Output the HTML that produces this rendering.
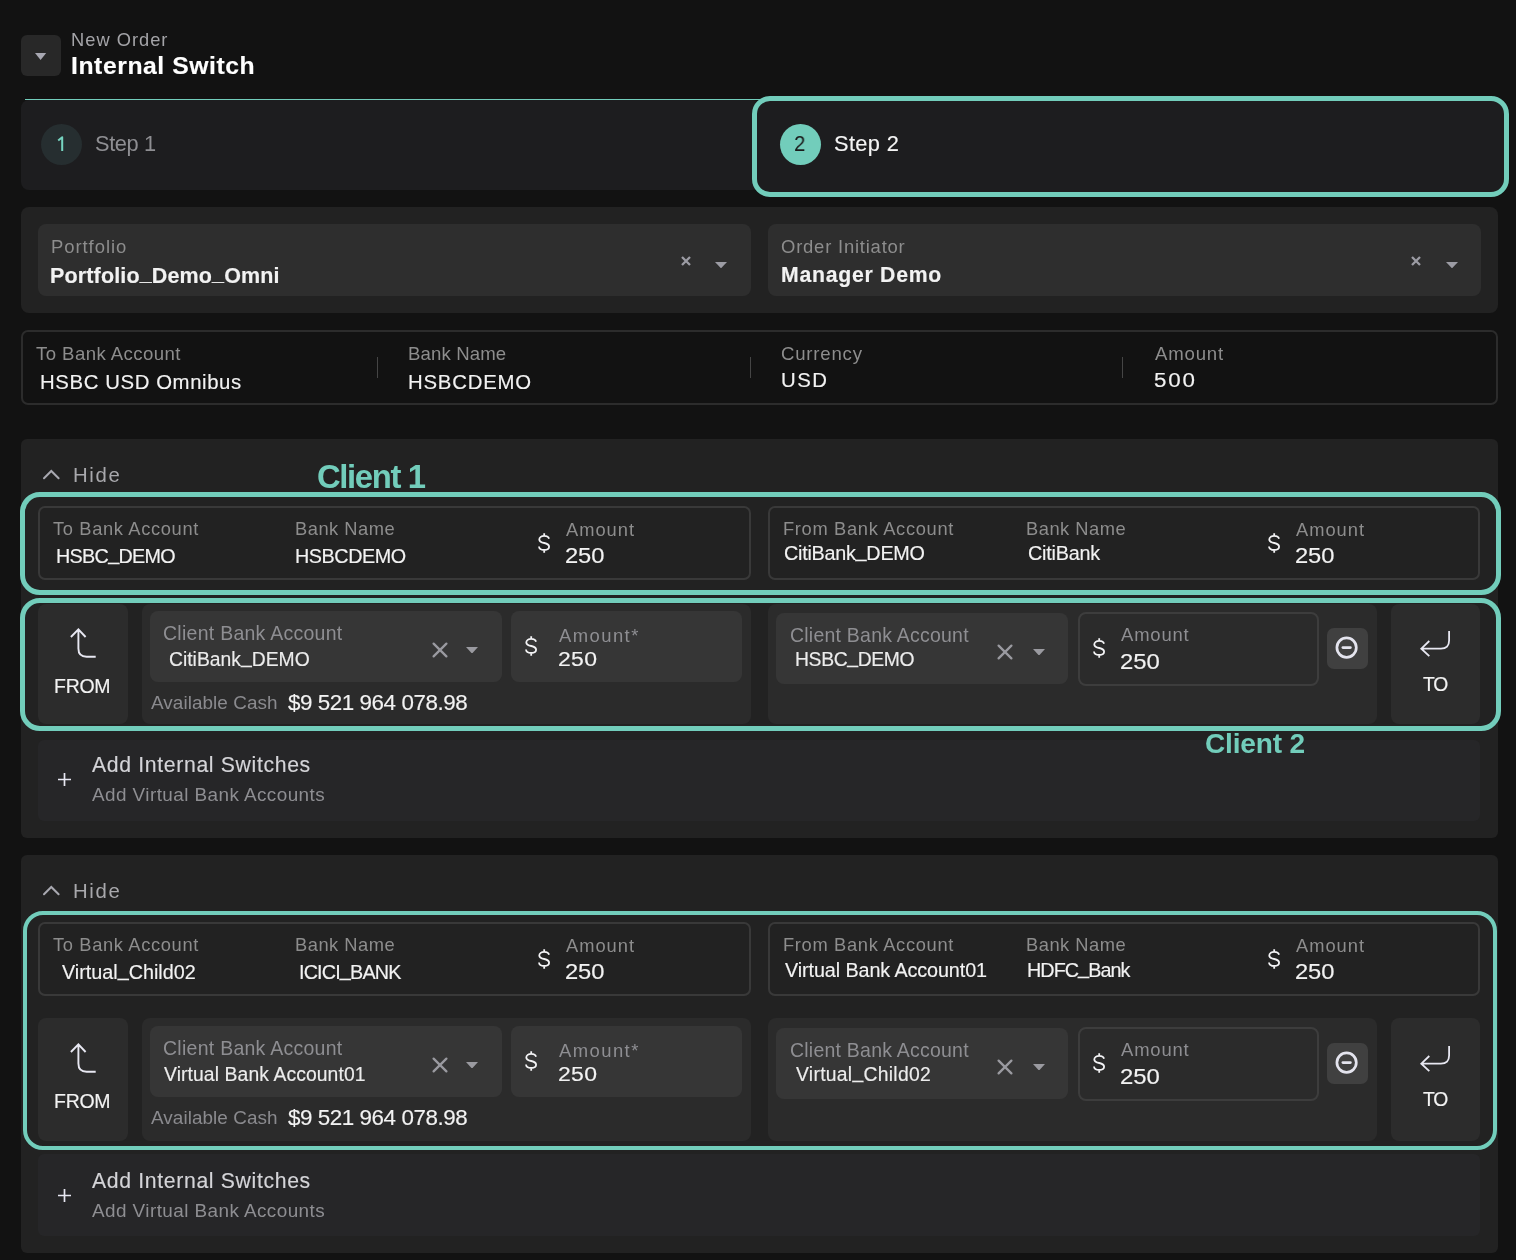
<!DOCTYPE html><html><head><meta charset="utf-8"><style>*{margin:0;padding:0;box-sizing:border-box}
html,body{width:1516px;height:1260px;overflow:hidden;background:#121212;font-family:"Liberation Sans", sans-serif}
.a{position:absolute}
.t{position:absolute;white-space:pre;line-height:normal;will-change:transform}
.s{-webkit-text-stroke:0.15px currentColor}
.u{position:relative;top:-0.14em}
svg{display:block}</style></head><body><div class="a" style="left:21px;top:35px;width:40px;height:41px;background:#282828;border-radius:6px;"></div>
<svg class="a" style="left:34.9px;top:52.9px" width="12" height="8"><path d="M0 0 L11.2 0 L5.6 7 Z" fill="#a8a8b2"/></svg>
<div class="a" style="left:21px;top:99.5px;width:739px;height:90.5px;background:#1d1d1f;border-radius:8px;"></div>
<div class="a" style="left:24.5px;top:99px;width:735.5px;height:1.2000000000000028px;background:#72cdbb;"></div>
<div class="a" style="left:41px;top:124px;width:41px;height:41px;background:#262e30;border-radius:20.5px;"></div>
<svg class="a" style="left:52px;top:132px" width="16" height="22"><path d="M6.2 8.6 L10.2 5.2 L10.2 19" stroke="#76d4c0" stroke-width="2" fill="none" stroke-linejoin="round"/></svg>
<div class="a" style="left:752px;top:96px;width:757px;height:101px;background:#1d1d1f;border-radius:18px;border:5.5px solid #72cdbb;"></div>
<div class="a" style="left:780px;top:124px;width:41px;height:41px;background:#72cdbb;border-radius:20.5px;"></div>
<div class="a" style="left:21px;top:207px;width:1477px;height:106px;background:#222222;border-radius:8px;"></div>
<div class="a" style="left:38px;top:224px;width:713px;height:72px;background:#2e2e2e;border-radius:8px;"></div>
<div class="a" style="left:768px;top:224px;width:713px;height:72px;background:#2e2e2e;border-radius:8px;"></div>
<svg class="a" style="left:679.5px;top:255px" width="12" height="12"><path d="M2 2 L10 10 M10 2 L2 10" stroke="#9c9ca4" stroke-width="2.3"/></svg>
<svg class="a" style="left:715.0px;top:261.85px" width="12" height="6.3"><path d="M0 0 L12 0 L6.0 6.3 Z" fill="#9c9ca4"/></svg>
<svg class="a" style="left:1409.5px;top:255px" width="12" height="12"><path d="M2 2 L10 10 M10 2 L2 10" stroke="#9c9ca4" stroke-width="2.3"/></svg>
<svg class="a" style="left:1446.0px;top:261.85px" width="12" height="6.3"><path d="M0 0 L12 0 L6.0 6.3 Z" fill="#9c9ca4"/></svg>
<div class="a" style="left:21px;top:330px;width:1477px;height:75px;border-radius:7px;border:2px solid #2c2c2c;"></div>
<div class="a" style="left:377.0px;top:357px;width:1.0px;height:21px;background:#454545;"></div>
<div class="a" style="left:749.5px;top:357px;width:1.0px;height:21px;background:#454545;"></div>
<div class="a" style="left:1122.1px;top:357px;width:1.0px;height:21px;background:#454545;"></div>
<div class="a" style="left:21px;top:439px;width:1477px;height:399.20000000000005px;background:#222222;border-radius:6px;"></div>
<svg class="a" style="left:41px;top:468px" width="20" height="13"><path d="M3 10.3 L10.3 3 L17.6 10.3" stroke="#a8a8b0" stroke-width="2" fill="none" stroke-linecap="round"/></svg>
<div class="a" style="left:38px;top:505.5px;width:713px;height:74.0px;border-radius:7px;border:2px solid #393939;"></div>
<div class="a" style="left:768px;top:505.5px;width:712px;height:74.0px;border-radius:7px;border:2px solid #393939;"></div>
<svg class="a" style="left:537.50px;top:532.80px" width="13" height="20"><path d="M6.2 0.2 L6.2 2.9 M6.2 17 L6.2 19.7 M11 5.7 C10.6 3.9 8.7 2.9 6.2 2.9 C3.4 2.9 1.3 4.3 1.3 6.4 C1.3 8.6 3.3 9.4 6.2 10 C9.1 10.6 11.1 11.5 11.1 13.8 C11.1 15.9 9.1 17 6.2 17 C3.3 17 1.2 15.7 1 13.5" stroke="#f4f4f6" stroke-width="1.8" fill="none"/></svg>
<svg class="a" style="left:1268.40px;top:532.90px" width="13" height="20"><path d="M6.2 0.2 L6.2 2.9 M6.2 17 L6.2 19.7 M11 5.7 C10.6 3.9 8.7 2.9 6.2 2.9 C3.4 2.9 1.3 4.3 1.3 6.4 C1.3 8.6 3.3 9.4 6.2 10 C9.1 10.6 11.1 11.5 11.1 13.8 C11.1 15.9 9.1 17 6.2 17 C3.3 17 1.2 15.7 1 13.5" stroke="#f4f4f6" stroke-width="1.8" fill="none"/></svg>
<div class="a" style="left:38px;top:603.6px;width:90px;height:120.79999999999995px;background:#2c2c2c;border-radius:8px;"></div>
<svg class="a" style="left:66px;top:626px" width="34" height="36"><path d="M4.9 11 L12.4 3.3 L19.6 11 M12.4 3.5 L12.4 22.6 Q12.4 30.8 20.6 30.8 L29.7 30.8" stroke="#e8e8f2" stroke-width="1.9" fill="none"/></svg>
<div class="a" style="left:142px;top:603.6px;width:609px;height:120.79999999999995px;background:#2b2b2b;border-radius:8px;"></div>
<div class="a" style="left:150px;top:611px;width:352px;height:71px;background:#363636;border-radius:8px;"></div>
<svg class="a" style="left:430.6px;top:641.2px" width="18" height="18"><path d="M2.6 2.6 L15.4 15.4 M15.4 2.6 L2.6 15.4" stroke="#9a9aa0" stroke-width="2.3" stroke-linecap="round"/></svg>
<svg class="a" style="left:466.0px;top:646.9000000000001px" width="12" height="6.6"><path d="M0 0 L12 0 L6.0 6.6 Z" fill="#9a9aa0"/></svg>
<div class="a" style="left:511px;top:611px;width:231px;height:71px;background:#363636;border-radius:8px;"></div>
<svg class="a" style="left:524.70px;top:636.00px" width="13" height="20"><path d="M6.2 0.2 L6.2 2.9 M6.2 17 L6.2 19.7 M11 5.7 C10.6 3.9 8.7 2.9 6.2 2.9 C3.4 2.9 1.3 4.3 1.3 6.4 C1.3 8.6 3.3 9.4 6.2 10 C9.1 10.6 11.1 11.5 11.1 13.8 C11.1 15.9 9.1 17 6.2 17 C3.3 17 1.2 15.7 1 13.5" stroke="#f4f4f6" stroke-width="1.8" fill="none"/></svg>
<div class="a" style="left:768px;top:603.6px;width:609px;height:120.79999999999995px;background:#2b2b2b;border-radius:8px;"></div>
<div class="a" style="left:776px;top:613px;width:292px;height:71px;background:#363636;border-radius:8px;"></div>
<svg class="a" style="left:996.3px;top:643.3px" width="18" height="18"><path d="M2.6 2.6 L15.4 15.4 M15.4 2.6 L2.6 15.4" stroke="#9a9aa0" stroke-width="2.3" stroke-linecap="round"/></svg>
<svg class="a" style="left:1033.0px;top:648.7px" width="12" height="6.6"><path d="M0 0 L12 0 L6.0 6.6 Z" fill="#9a9aa0"/></svg>
<div class="a" style="left:1077.5px;top:611.5px;width:241.5px;height:74.0px;border-radius:8px;border:2px solid #3d3d3d;"></div>
<svg class="a" style="left:1092.80px;top:637.90px" width="13" height="20"><path d="M6.2 0.2 L6.2 2.9 M6.2 17 L6.2 19.7 M11 5.7 C10.6 3.9 8.7 2.9 6.2 2.9 C3.4 2.9 1.3 4.3 1.3 6.4 C1.3 8.6 3.3 9.4 6.2 10 C9.1 10.6 11.1 11.5 11.1 13.8 C11.1 15.9 9.1 17 6.2 17 C3.3 17 1.2 15.7 1 13.5" stroke="#f4f4f6" stroke-width="1.8" fill="none"/></svg>
<div class="a" style="left:1327px;top:628px;width:41px;height:41px;background:#404040;border-radius:7px;"></div>
<svg class="a" style="left:1333px;top:634px" width="27" height="27"><circle cx="13.6" cy="13.6" r="9.7" stroke="#e4e4ee" stroke-width="2.7" fill="none"/><path d="M9.9 13.6 L17.4 13.6" stroke="#e4e4ee" stroke-width="2.7" stroke-linecap="round"/></svg>
<div class="a" style="left:1391px;top:603.6px;width:89px;height:120.79999999999995px;background:#2c2c2c;border-radius:8px;"></div>
<svg class="a" style="left:1418px;top:628px" width="36" height="32"><path d="M31.1 3 L31.1 12.5 Q31.1 20.7 22.9 20.7 L3.5 20.7 M11.3 13 L3.3 20.7 L11.3 28.2" stroke="#e8e8f2" stroke-width="1.8" fill="none"/></svg>
<div class="a" style="left:38px;top:739.6px;width:1442px;height:81.0px;background:#262628;border-radius:6px;"></div>
<svg class="a" style="left:57px;top:772px" width="15" height="15"><path d="M7.5 1 L7.5 14 M1 7.5 L14 7.5" stroke="#e8e8f2" stroke-width="1.7"/></svg>
<div class="a" style="left:21px;top:855px;width:1477px;height:397.9000000000001px;background:#222222;border-radius:6px;"></div>
<svg class="a" style="left:41px;top:884px" width="20" height="13"><path d="M3 10.3 L10.3 3 L17.6 10.3" stroke="#a8a8b0" stroke-width="2" fill="none" stroke-linecap="round"/></svg>
<div class="a" style="left:38px;top:921.5px;width:713px;height:74.0px;border-radius:7px;border:2px solid #393939;"></div>
<div class="a" style="left:768px;top:921.5px;width:712px;height:74.0px;border-radius:7px;border:2px solid #393939;"></div>
<svg class="a" style="left:537.50px;top:948.80px" width="13" height="20"><path d="M6.2 0.2 L6.2 2.9 M6.2 17 L6.2 19.7 M11 5.7 C10.6 3.9 8.7 2.9 6.2 2.9 C3.4 2.9 1.3 4.3 1.3 6.4 C1.3 8.6 3.3 9.4 6.2 10 C9.1 10.6 11.1 11.5 11.1 13.8 C11.1 15.9 9.1 17 6.2 17 C3.3 17 1.2 15.7 1 13.5" stroke="#f4f4f6" stroke-width="1.8" fill="none"/></svg>
<svg class="a" style="left:1268.40px;top:948.90px" width="13" height="20"><path d="M6.2 0.2 L6.2 2.9 M6.2 17 L6.2 19.7 M11 5.7 C10.6 3.9 8.7 2.9 6.2 2.9 C3.4 2.9 1.3 4.3 1.3 6.4 C1.3 8.6 3.3 9.4 6.2 10 C9.1 10.6 11.1 11.5 11.1 13.8 C11.1 15.9 9.1 17 6.2 17 C3.3 17 1.2 15.7 1 13.5" stroke="#f4f4f6" stroke-width="1.8" fill="none"/></svg>
<div class="a" style="left:38px;top:1018px;width:90px;height:122.70000000000005px;background:#2c2c2c;border-radius:8px;"></div>
<svg class="a" style="left:66px;top:1041px" width="34" height="36"><path d="M4.9 11 L12.4 3.3 L19.6 11 M12.4 3.5 L12.4 22.6 Q12.4 30.8 20.6 30.8 L29.7 30.8" stroke="#e8e8f2" stroke-width="1.9" fill="none"/></svg>
<div class="a" style="left:142px;top:1018px;width:609px;height:122.70000000000005px;background:#2b2b2b;border-radius:8px;"></div>
<div class="a" style="left:150px;top:1026px;width:352px;height:71px;background:#363636;border-radius:8px;"></div>
<svg class="a" style="left:430.6px;top:1056.2px" width="18" height="18"><path d="M2.6 2.6 L15.4 15.4 M15.4 2.6 L2.6 15.4" stroke="#9a9aa0" stroke-width="2.3" stroke-linecap="round"/></svg>
<svg class="a" style="left:466.0px;top:1061.9px" width="12" height="6.6"><path d="M0 0 L12 0 L6.0 6.6 Z" fill="#9a9aa0"/></svg>
<div class="a" style="left:511px;top:1026px;width:231px;height:71px;background:#363636;border-radius:8px;"></div>
<svg class="a" style="left:524.70px;top:1051.00px" width="13" height="20"><path d="M6.2 0.2 L6.2 2.9 M6.2 17 L6.2 19.7 M11 5.7 C10.6 3.9 8.7 2.9 6.2 2.9 C3.4 2.9 1.3 4.3 1.3 6.4 C1.3 8.6 3.3 9.4 6.2 10 C9.1 10.6 11.1 11.5 11.1 13.8 C11.1 15.9 9.1 17 6.2 17 C3.3 17 1.2 15.7 1 13.5" stroke="#f4f4f6" stroke-width="1.8" fill="none"/></svg>
<div class="a" style="left:768px;top:1018px;width:609px;height:122.70000000000005px;background:#2b2b2b;border-radius:8px;"></div>
<div class="a" style="left:776px;top:1028px;width:292px;height:71px;background:#363636;border-radius:8px;"></div>
<svg class="a" style="left:996.3px;top:1058.3px" width="18" height="18"><path d="M2.6 2.6 L15.4 15.4 M15.4 2.6 L2.6 15.4" stroke="#9a9aa0" stroke-width="2.3" stroke-linecap="round"/></svg>
<svg class="a" style="left:1033.0px;top:1063.7px" width="12" height="6.6"><path d="M0 0 L12 0 L6.0 6.6 Z" fill="#9a9aa0"/></svg>
<div class="a" style="left:1077.5px;top:1026.5px;width:241.5px;height:74.0px;border-radius:8px;border:2px solid #3d3d3d;"></div>
<svg class="a" style="left:1092.80px;top:1052.90px" width="13" height="20"><path d="M6.2 0.2 L6.2 2.9 M6.2 17 L6.2 19.7 M11 5.7 C10.6 3.9 8.7 2.9 6.2 2.9 C3.4 2.9 1.3 4.3 1.3 6.4 C1.3 8.6 3.3 9.4 6.2 10 C9.1 10.6 11.1 11.5 11.1 13.8 C11.1 15.9 9.1 17 6.2 17 C3.3 17 1.2 15.7 1 13.5" stroke="#f4f4f6" stroke-width="1.8" fill="none"/></svg>
<div class="a" style="left:1327px;top:1043px;width:41px;height:41px;background:#404040;border-radius:7px;"></div>
<svg class="a" style="left:1333px;top:1049px" width="27" height="27"><circle cx="13.6" cy="13.6" r="9.7" stroke="#e4e4ee" stroke-width="2.7" fill="none"/><path d="M9.9 13.6 L17.4 13.6" stroke="#e4e4ee" stroke-width="2.7" stroke-linecap="round"/></svg>
<div class="a" style="left:1391px;top:1018px;width:89px;height:122.70000000000005px;background:#2c2c2c;border-radius:8px;"></div>
<svg class="a" style="left:1418px;top:1043px" width="36" height="32"><path d="M31.1 3 L31.1 12.5 Q31.1 20.7 22.9 20.7 L3.5 20.7 M11.3 13 L3.3 20.7 L11.3 28.2" stroke="#e8e8f2" stroke-width="1.8" fill="none"/></svg>
<div class="a" style="left:38px;top:1153.8px;width:1442px;height:81.90000000000009px;background:#262628;border-radius:6px;"></div>
<svg class="a" style="left:57px;top:1188px" width="15" height="15"><path d="M7.5 1 L7.5 14 M1 7.5 L14 7.5" stroke="#e8e8f2" stroke-width="1.7"/></svg>
<div class="a" style="left:19.5px;top:492px;width:1481.5px;height:103px;border-radius:20px;border:5.5px solid #72cdbb;"></div>
<div class="a" style="left:19.5px;top:597.5px;width:1481.0px;height:133.0px;border-radius:20px;border:5.5px solid #72cdbb;"></div>
<div class="a" style="left:23px;top:911px;width:1473.5px;height:239px;border-radius:20px;border:4.5px solid #72cdbb;"></div>
<div class="t" style="left:71.00px;top:28.90px;font-size:18.31px;letter-spacing:1.000px;color:#a4a4a8">New Order</div>
<div class="t s" style="left:71.00px;top:52.10px;font-size:24.71px;font-weight:bold;letter-spacing:0.571px;color:#ffffff">Internal Switch</div>
<div class="t" style="left:94.70px;top:131.30px;font-size:21.8px;letter-spacing:-0.400px;color:#8e8e92">Step 1</div>
<div class="t" style="left:794.00px;top:131.20px;font-size:21.8px;letter-spacing:0.000px;transform:scaleX(0.9273);transform-origin:1px 0;color:#1a1a1a">2</div>
<div class="t s" style="left:833.70px;top:131.20px;font-size:21.8px;letter-spacing:0.380px;color:#f4f4f4">Step 2</div>
<div class="t" style="left:50.80px;top:236.00px;font-size:18.46px;letter-spacing:0.950px;color:#8d8d8d">Portfolio</div>
<div class="t s" style="left:49.80px;top:264.30px;font-size:21.51px;font-weight:bold;letter-spacing:0.144px;color:#f2f2f2">Portfolio<span class="u">_</span>Demo<span class="u">_</span>Omni</div>
<div class="t" style="left:781.00px;top:236.00px;font-size:18.46px;letter-spacing:0.786px;color:#8d8d8d">Order Initiator</div>
<div class="t s" style="left:781.20px;top:262.60px;font-size:21.22px;font-weight:bold;letter-spacing:0.745px;color:#f2f2f2">Manager Demo</div>
<div class="t" style="left:36.40px;top:343.00px;font-size:18.6px;letter-spacing:0.429px;color:#8d8d8d">To Bank Account</div>
<div class="t s" style="left:40.30px;top:371.00px;font-size:20.35px;letter-spacing:0.600px;color:#f2f2f2">HSBC USD Omnibus</div>
<div class="t" style="left:408.00px;top:343.00px;font-size:18.6px;letter-spacing:0.125px;color:#8d8d8d">Bank Name</div>
<div class="t s" style="left:407.50px;top:371.00px;font-size:20.35px;letter-spacing:0.800px;color:#f2f2f2">HSBCDEMO</div>
<div class="t" style="left:781.20px;top:343.00px;font-size:18.6px;letter-spacing:0.786px;color:#8d8d8d">Currency</div>
<div class="t s" style="left:781.20px;top:369.10px;font-size:20.35px;letter-spacing:1.500px;color:#f2f2f2">USD</div>
<div class="t" style="left:1154.90px;top:343.00px;font-size:18.6px;letter-spacing:0.800px;color:#8d8d8d">Amount</div>
<div class="t s" style="left:1154.00px;top:369.10px;font-size:20.35px;letter-spacing:1.682px;transform:scaleX(1.1000);transform-origin:1px 0;color:#f2f2f2">500</div>
<div class="t" style="left:73.20px;top:464.00px;font-size:20.35px;letter-spacing:1.667px;color:#a8a8ac">Hide</div>
<div class="t" style="left:52.90px;top:518.00px;font-size:18.31px;letter-spacing:0.643px;color:#8d8d8d">To Bank Account</div>
<div class="t s" style="left:56.20px;top:545.00px;font-size:19.77px;letter-spacing:-0.688px;color:#f2f2f2">HSBC<span class="u">_</span>DEMO</div>
<div class="t" style="left:294.50px;top:518.00px;font-size:18.31px;letter-spacing:0.500px;color:#8d8d8d">Bank Name</div>
<div class="t s" style="left:294.50px;top:545.00px;font-size:19.77px;letter-spacing:-0.429px;color:#f2f2f2">HSBCDEMO</div>
<div class="t" style="left:565.90px;top:518.50px;font-size:18.31px;letter-spacing:1.000px;color:#8d8d8d">Amount</div>
<div class="t s" style="left:564.90px;top:543.30px;font-size:21.8px;letter-spacing:0.000px;transform:scaleX(1.0886);transform-origin:1px 0;color:#f2f2f2">250</div>
<div class="t" style="left:783.20px;top:518.00px;font-size:18.31px;letter-spacing:0.669px;color:#8d8d8d">From Bank Account</div>
<div class="t s" style="left:784.00px;top:542.40px;font-size:19.77px;letter-spacing:-0.250px;color:#f2f2f2">CitiBank<span class="u">_</span>DEMO</div>
<div class="t" style="left:1025.70px;top:518.00px;font-size:18.31px;letter-spacing:0.500px;color:#8d8d8d">Bank Name</div>
<div class="t s" style="left:1028.00px;top:542.40px;font-size:19.77px;letter-spacing:-0.200px;color:#f2f2f2">CitiBank</div>
<div class="t" style="left:1296.00px;top:518.50px;font-size:18.31px;letter-spacing:1.000px;color:#8d8d8d">Amount</div>
<div class="t s" style="left:1295.00px;top:543.30px;font-size:21.8px;letter-spacing:0.000px;transform:scaleX(1.0886);transform-origin:1px 0;color:#f2f2f2">250</div>
<div class="t s" style="left:54.40px;top:675.40px;font-size:19.48px;letter-spacing:-0.267px;color:#f2f2f2">FROM</div>
<div class="t" style="left:162.80px;top:622.30px;font-size:19.48px;letter-spacing:0.278px;color:#8e8e92">Client Bank Account</div>
<div class="t s" style="left:169.20px;top:648.50px;font-size:19.33px;letter-spacing:0.000px;color:#ececec">CitiBank<span class="u">_</span>DEMO</div>
<div class="t" style="left:559.30px;top:625.00px;font-size:18.46px;letter-spacing:1.433px;color:#8e8e92">Amount*</div>
<div class="t s" style="left:558.30px;top:647.30px;font-size:20.93px;letter-spacing:0.364px;transform:scaleX(1.1000);transform-origin:1px 0;color:#f2f2f2">250</div>
<div class="t" style="left:150.70px;top:692.20px;font-size:18.9px;letter-spacing:0.069px;color:#8a8a8e">Available Cash</div>
<div class="t s" style="left:288.40px;top:690.40px;font-size:22.38px;letter-spacing:-0.438px;color:#f2f2f2">$9 521 964 078.98</div>
<div class="t" style="left:789.60px;top:624.20px;font-size:19.48px;letter-spacing:0.239px;color:#8e8e92">Client Bank Account</div>
<div class="t s" style="left:794.50px;top:648.90px;font-size:19.33px;letter-spacing:-0.350px;color:#ececec">HSBC<span class="u">_</span>DEMO</div>
<div class="t" style="left:1120.70px;top:624.20px;font-size:18.46px;letter-spacing:0.840px;color:#8e8e92">Amount</div>
<div class="t s" style="left:1119.70px;top:648.60px;font-size:21.8px;letter-spacing:0.000px;transform:scaleX(1.0971);transform-origin:1px 0;color:#f2f2f2">250</div>
<div class="t s" style="left:1423.10px;top:674.10px;font-size:19.33px;letter-spacing:-1.300px;color:#f2f2f2">TO</div>
<div class="t s" style="left:92.20px;top:753.10px;font-size:21.22px;letter-spacing:0.650px;color:#d4d4d8">Add Internal Switches</div>
<div class="t" style="left:92.20px;top:783.80px;font-size:18.9px;letter-spacing:0.433px;color:#8e8e92">Add Virtual Bank Accounts</div>
<div class="t" style="left:73.20px;top:880.00px;font-size:20.35px;letter-spacing:1.667px;color:#a8a8ac">Hide</div>
<div class="t" style="left:52.90px;top:934.00px;font-size:18.31px;letter-spacing:0.643px;color:#8d8d8d">To Bank Account</div>
<div class="t s" style="left:61.50px;top:961.00px;font-size:19.77px;letter-spacing:0.000px;color:#f2f2f2">Virtual<span class="u">_</span>Child02</div>
<div class="t" style="left:294.50px;top:934.00px;font-size:18.31px;letter-spacing:0.500px;color:#8d8d8d">Bank Name</div>
<div class="t s" style="left:298.50px;top:961.00px;font-size:19.77px;letter-spacing:-0.833px;color:#f2f2f2">ICICI<span class="u">_</span>BANK</div>
<div class="t" style="left:565.90px;top:934.50px;font-size:18.31px;letter-spacing:1.000px;color:#8d8d8d">Amount</div>
<div class="t s" style="left:564.90px;top:959.30px;font-size:21.8px;letter-spacing:0.000px;transform:scaleX(1.0886);transform-origin:1px 0;color:#f2f2f2">250</div>
<div class="t" style="left:783.20px;top:934.00px;font-size:18.31px;letter-spacing:0.669px;color:#8d8d8d">From Bank Account</div>
<div class="t s" style="left:785.00px;top:959.00px;font-size:19.77px;letter-spacing:-0.095px;color:#f2f2f2">Virtual Bank Account01</div>
<div class="t" style="left:1025.70px;top:934.00px;font-size:18.31px;letter-spacing:0.500px;color:#8d8d8d">Bank Name</div>
<div class="t s" style="left:1027.30px;top:959.00px;font-size:19.77px;letter-spacing:-0.950px;color:#f2f2f2">HDFC<span class="u">_</span>Bank</div>
<div class="t" style="left:1296.00px;top:934.50px;font-size:18.31px;letter-spacing:1.000px;color:#8d8d8d">Amount</div>
<div class="t s" style="left:1295.00px;top:959.30px;font-size:21.8px;letter-spacing:0.000px;transform:scaleX(1.0886);transform-origin:1px 0;color:#f2f2f2">250</div>
<div class="t s" style="left:54.40px;top:1090.40px;font-size:19.48px;letter-spacing:-0.267px;color:#f2f2f2">FROM</div>
<div class="t" style="left:162.80px;top:1037.30px;font-size:19.48px;letter-spacing:0.278px;color:#8e8e92">Client Bank Account</div>
<div class="t s" style="left:163.70px;top:1063.50px;font-size:19.33px;letter-spacing:0.095px;color:#ececec">Virtual Bank Account01</div>
<div class="t" style="left:559.30px;top:1040.00px;font-size:18.46px;letter-spacing:1.433px;color:#8e8e92">Amount*</div>
<div class="t s" style="left:558.30px;top:1062.30px;font-size:20.93px;letter-spacing:0.364px;transform:scaleX(1.1000);transform-origin:1px 0;color:#f2f2f2">250</div>
<div class="t" style="left:150.70px;top:1107.20px;font-size:18.9px;letter-spacing:0.069px;color:#8a8a8e">Available Cash</div>
<div class="t s" style="left:288.40px;top:1105.40px;font-size:22.38px;letter-spacing:-0.438px;color:#f2f2f2">$9 521 964 078.98</div>
<div class="t" style="left:789.60px;top:1039.20px;font-size:19.48px;letter-spacing:0.239px;color:#8e8e92">Client Bank Account</div>
<div class="t s" style="left:795.50px;top:1063.90px;font-size:19.33px;letter-spacing:0.286px;color:#ececec">Virtual<span class="u">_</span>Child02</div>
<div class="t" style="left:1120.70px;top:1039.20px;font-size:18.46px;letter-spacing:0.840px;color:#8e8e92">Amount</div>
<div class="t s" style="left:1119.70px;top:1063.60px;font-size:21.8px;letter-spacing:0.000px;transform:scaleX(1.0971);transform-origin:1px 0;color:#f2f2f2">250</div>
<div class="t s" style="left:1423.10px;top:1089.10px;font-size:19.33px;letter-spacing:-1.300px;color:#f2f2f2">TO</div>
<div class="t s" style="left:92.20px;top:1169.10px;font-size:21.22px;letter-spacing:0.650px;color:#d4d4d8">Add Internal Switches</div>
<div class="t" style="left:92.20px;top:1199.80px;font-size:18.9px;letter-spacing:0.433px;color:#8e8e92">Add Virtual Bank Accounts</div>
<div class="t" style="left:317.30px;top:457.80px;font-size:32.85px;font-weight:bold;letter-spacing:-1.371px;color:#72cdbb">Client 1</div>
<div class="t" style="left:1204.80px;top:728.10px;font-size:28.05px;font-weight:bold;letter-spacing:-0.171px;color:#72cdbb">Client 2</div></body></html>
